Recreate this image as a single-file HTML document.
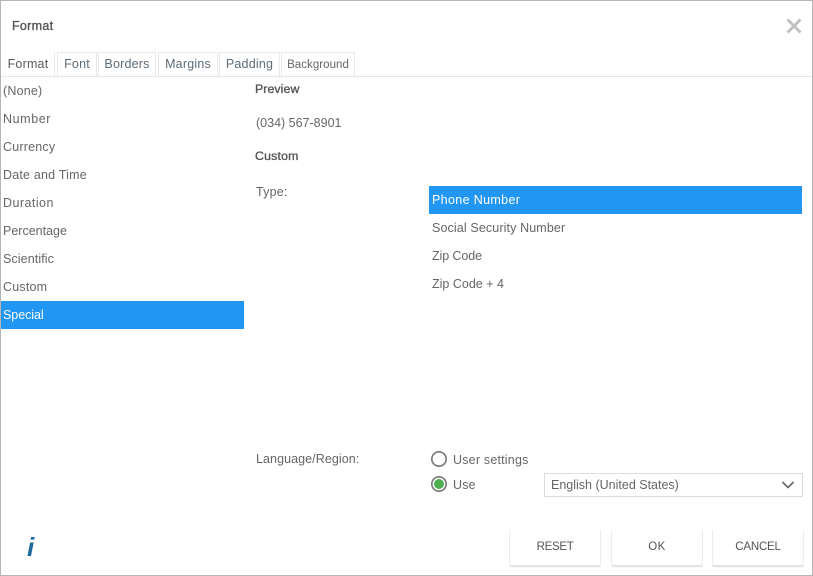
<!DOCTYPE html>
<html><head><meta charset="utf-8"><style>
html,body{margin:0;padding:0;background:#fff}
body{width:813px;height:576px;position:relative;overflow:hidden;font-family:"Liberation Sans",sans-serif;font-size:12.5px;color:#666}
.t{position:absolute;white-space:nowrap;line-height:16px;letter-spacing:.2px}
.h{position:absolute;white-space:nowrap;line-height:16px;font-size:12.3px;color:#555;-webkit-text-stroke:.35px #555;letter-spacing:.1px}
.b{position:absolute}
.tab{position:absolute;top:52px;height:23px;border:1px solid #e8e8e8;border-bottom:none;text-align:center;line-height:23px;color:#5f6b75;letter-spacing:.2px}
.btn{position:absolute;top:530px;height:36px;background:#fff;border-left:1px solid #ececec;border-right:1px solid #ececec;border-bottom:1px solid #e2e2e2;box-shadow:0 2px 1px -1px #ddd;text-align:center;line-height:34px;font-size:11.5px;color:#555;box-sizing:border-box}
</style></head><body>
<div class="b" style="left:0;top:0;width:811px;height:574px;border:1px solid #b5b5b5"></div>
<div class="h" style="left:12px;top:18px;font-size:12.5px;letter-spacing:.3px">Format</div>
<svg class="b" style="left:785px;top:18px" width="18" height="16"><path d="M2.5 1.5 15.5 14.5M15.5 1.5 2.5 14.5" stroke="#c2c2c2" stroke-width="3" fill="none"/></svg>
<div class="b" style="left:1px;top:76px;width:811px;height:1px;background:#e6e6e6"></div>
<div class="tab" style="left:2px;width:52px;height:24px;background:#fff;border:none;border-right:1px solid #e8e8e8;color:#5a5a5a;line-height:24px">Format</div>
<div class="tab" style="left:57px;width:38px">Font</div>
<div class="tab" style="left:98px;width:56px">Borders</div>
<div class="tab" style="left:158px;width:58px">Margins</div>
<div class="tab" style="left:219px;width:59px">Padding</div>
<div class="tab" style="left:281px;width:72px;font-size:11.5px;letter-spacing:.05px;color:#666;line-height:24px">Background</div>

<div class="t" style="left:3px;top:83px">(None)</div>
<div class="t" style="left:3px;top:111px;letter-spacing:.6px">Number</div>
<div class="t" style="left:3px;top:139px">Currency</div>
<div class="t" style="left:3px;top:167px">Date and Time</div>
<div class="t" style="left:3px;top:195px;letter-spacing:.45px">Duration</div>
<div class="t" style="left:3px;top:223px;letter-spacing:0">Percentage</div>
<div class="t" style="left:3px;top:251px;letter-spacing:.1px">Scientific</div>
<div class="t" style="left:3px;top:279px">Custom</div>
<div class="b" style="left:1px;top:301px;width:243px;height:28px;background:#2196f3"></div>
<div class="t" style="left:3px;top:307px;color:#fff;letter-spacing:-.05px">Special</div>

<div class="h" style="left:255px;top:81px">Preview</div>
<div class="t" style="left:256px;top:115px;letter-spacing:0">(034) 567-8901</div>
<div class="h" style="left:255px;top:148px;letter-spacing:.2px">Custom</div>
<div class="t" style="left:256px;top:184px">Type:</div>

<div class="b" style="left:429px;top:186px;width:373px;height:28px;background:#2196f3"></div>
<div class="t" style="left:432px;top:192px;color:#fff;letter-spacing:.35px">Phone Number</div>
<div class="t" style="left:432px;top:220px;letter-spacing:.12px">Social Security Number</div>
<div class="t" style="left:432px;top:248px;letter-spacing:-.1px">Zip Code</div>
<div class="t" style="left:432px;top:276px;letter-spacing:0">Zip Code + 4</div>

<div class="t" style="left:256px;top:451px;letter-spacing:.07px">Language/Region:</div>
<svg class="b" style="left:430px;top:450px" width="18" height="18"><circle cx="9" cy="9" r="7.2" fill="#fff" stroke="#757575" stroke-width="1.6"/></svg>
<div class="t" style="left:453px;top:452px">User settings</div>
<svg class="b" style="left:430px;top:475px" width="18" height="18"><circle cx="9" cy="9" r="7.2" fill="#fff" stroke="#757575" stroke-width="1.6"/><circle cx="9" cy="9" r="5" fill="#4caf50"/></svg>
<div class="t" style="left:453px;top:477px">Use</div>
<div class="b" style="left:544px;top:473px;width:259px;height:24px;border:1px solid #dcdcdc;box-sizing:border-box"></div>
<div class="t" style="left:551px;top:477px;letter-spacing:0">English (United States)</div>
<svg class="b" style="left:781px;top:480px" width="14" height="10"><path d="M1.5 2 7 7.5 12.5 2" stroke="#666" stroke-width="1.6" fill="none"/></svg>

<div class="t" style="left:27px;top:534px;font-weight:bold;font-style:italic;font-size:26px;line-height:26px;color:#1f6a9c;letter-spacing:0">i</div>
<div class="btn" style="left:509px;width:92px;letter-spacing:-.3px">RESET</div>
<div class="btn" style="left:611px;width:92px;letter-spacing:.5px">OK</div>
<div class="btn" style="left:712px;width:92px;letter-spacing:-.2px">CANCEL</div>
</body></html>
